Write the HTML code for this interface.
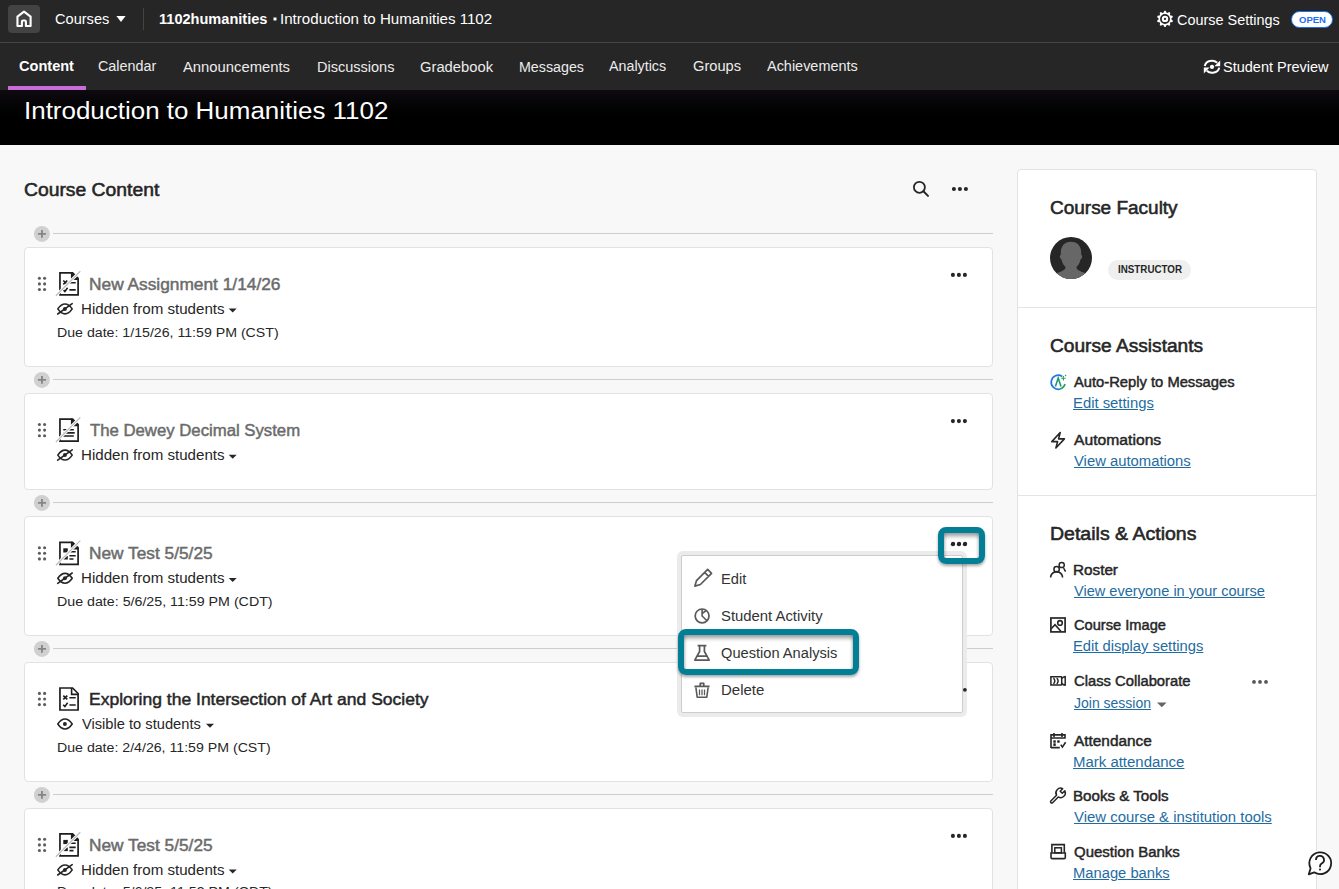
<!DOCTYPE html>
<html><head><meta charset="utf-8"><style>
html,body{margin:0;padding:0;}
body{width:1339px;height:889px;overflow:hidden;position:relative;background:#f8f8f8;font-family:"Liberation Sans",sans-serif;}
.t{position:absolute;line-height:1;white-space:nowrap;}
.r{position:absolute;}
.ov{position:absolute;left:0;top:0;}
</style></head><body>
<div class="r" style="left:0px;top:0px;width:1339px;height:90px;background:#262626;"></div>
<div class="r" style="left:0px;top:42px;width:1339px;height:1px;background:#454545;"></div>
<div class="r" style="left:8px;top:5px;width:32px;height:28px;background:#434343;border-radius:4px;"></div>
<div class="t" style="left:54.96px;top:12.34px;font-size:14px;color:#fff;transform:scaleX(1.0412);transform-origin:0 0;">Courses</div>
<div class="r" style="left:143px;top:8px;width:1px;height:22px;background:#444;"></div>
<div class="t" style="left:159.46px;top:12.34px;font-size:14px;color:#fff;font-weight:700;transform:scaleX(1.0398);transform-origin:0 0;">1102humanities</div>
<div class="t" style="left:280.42px;top:12.34px;font-size:14px;color:#fff;transform:scaleX(1.0790);transform-origin:0 0;">Introduction to Humanities 1102</div>
<div class="t" style="left:1176.77px;top:13.44px;font-size:14px;color:#fff;transform:scaleX(1.0306);transform-origin:0 0;">Course Settings</div>
<div class="r" style="left:1291px;top:11px;width:41.5px;height:16.5px;background:#fff;border:1px solid #1a6ff2;border-radius:9px;box-sizing:border-box;"></div>
<div class="t" style="left:1298.80px;top:14.80px;font-size:9.8px;color:#1a6ff2;font-weight:700;transform:scaleX(0.9704);transform-origin:0 0;">OPEN</div>
<div class="t" style="left:18.96px;top:59.24px;font-size:14px;color:#fff;font-weight:700;transform:scaleX(1.0394);transform-origin:0 0;">Content</div>
<div class="t" style="left:97.88px;top:59.24px;font-size:14px;color:#ececec;transform:scaleX(1.0250);transform-origin:0 0;">Calendar</div>
<div class="t" style="left:183.30px;top:60.04px;font-size:14px;color:#ececec;transform:scaleX(1.0574);transform-origin:0 0;">Announcements</div>
<div class="t" style="left:317.36px;top:60.04px;font-size:14px;color:#ececec;transform:scaleX(1.0370);transform-origin:0 0;">Discussions</div>
<div class="t" style="left:420.05px;top:60.04px;font-size:14px;color:#ececec;transform:scaleX(1.0544);transform-origin:0 0;">Gradebook</div>
<div class="t" style="left:518.88px;top:60.04px;font-size:14px;color:#ececec;transform:scaleX(1.0177);transform-origin:0 0;">Messages</div>
<div class="t" style="left:609.10px;top:59.24px;font-size:14px;color:#ececec;transform:scaleX(1.0196);transform-origin:0 0;">Analytics</div>
<div class="t" style="left:692.85px;top:59.24px;font-size:14px;color:#ececec;transform:scaleX(1.0467);transform-origin:0 0;">Groups</div>
<div class="t" style="left:766.60px;top:59.24px;font-size:14px;color:#ececec;transform:scaleX(1.0318);transform-origin:0 0;">Achievements</div>
<div class="r" style="left:8px;top:86px;width:78px;height:4px;background:#c86dd7;"></div>
<div class="t" style="left:1222.96px;top:60.34px;font-size:14px;color:#fff;transform:scaleX(1.0356);transform-origin:0 0;">Student Preview</div>
<div class="r" style="left:0px;top:90px;width:1339px;height:55px;background:linear-gradient(#0d0b0f 0px,#050406 14px,#000 27px);"></div>
<div class="t" style="left:24.07px;top:100.36px;font-size:23.3px;color:#fff;transform:scaleX(1.1136);transform-origin:0 0;">Introduction to Humanities 1102</div>
<div class="t" style="left:23.83px;top:180.95px;font-size:18px;color:#262626;transform:scaleX(1.0728);transform-origin:0 0;-webkit-text-stroke:0.55px #262626;">Course Content</div>
<div class="r" style="left:53px;top:233px;width:940px;height:1px;background:#cdcdcd;"></div>
<div class="r" style="left:53px;top:379px;width:940px;height:1px;background:#cdcdcd;"></div>
<div class="r" style="left:53px;top:502px;width:940px;height:1px;background:#cdcdcd;"></div>
<div class="r" style="left:53px;top:648px;width:940px;height:1px;background:#cdcdcd;"></div>
<div class="r" style="left:53px;top:794px;width:940px;height:1px;background:#cdcdcd;"></div>
<div class="r" style="left:24px;top:247px;width:969px;height:120px;background:#fff;border:1px solid #e2e2e2;border-radius:4px;box-sizing:border-box;"></div>
<div class="t" style="left:88.52px;top:276.65px;font-size:16px;color:#6b6b6b;transform:scaleX(1.0818);transform-origin:0 0;-webkit-text-stroke:0.45px #6b6b6b;">New Assignment 1/14/26</div>
<div class="t" style="left:80.52px;top:301.54px;font-size:14px;color:#262626;transform:scaleX(1.0788);transform-origin:0 0;">Hidden from students</div>
<div class="t" style="left:56.67px;top:325.50px;font-size:13.7px;color:#262626;transform:scaleX(1.0343);transform-origin:0 0;">Due date: 1/15/26, 11:59 PM (CST)</div>
<div class="r" style="left:24px;top:393px;width:969px;height:97px;background:#fff;border:1px solid #e2e2e2;border-radius:4px;box-sizing:border-box;"></div>
<div class="t" style="left:89.60px;top:422.85px;font-size:16px;color:#6b6b6b;transform:scaleX(1.0455);transform-origin:0 0;-webkit-text-stroke:0.45px #6b6b6b;">The Dewey Decimal System</div>
<div class="t" style="left:80.52px;top:447.74px;font-size:14px;color:#262626;transform:scaleX(1.0788);transform-origin:0 0;">Hidden from students</div>
<div class="r" style="left:24px;top:516px;width:969px;height:120px;background:#fff;border:1px solid #e2e2e2;border-radius:4px;box-sizing:border-box;"></div>
<div class="t" style="left:88.52px;top:546.05px;font-size:16px;color:#6b6b6b;transform:scaleX(1.0805);transform-origin:0 0;-webkit-text-stroke:0.45px #6b6b6b;">New Test 5/5/25</div>
<div class="t" style="left:80.52px;top:570.94px;font-size:14px;color:#262626;transform:scaleX(1.0788);transform-origin:0 0;">Hidden from students</div>
<div class="t" style="left:56.66px;top:594.90px;font-size:13.7px;color:#262626;transform:scaleX(1.0393);transform-origin:0 0;">Due date: 5/6/25, 11:59 PM (CDT)</div>
<div class="r" style="left:24px;top:662px;width:969px;height:120px;background:#fff;border:1px solid #e2e2e2;border-radius:4px;box-sizing:border-box;"></div>
<div class="t" style="left:88.51px;top:691.75px;font-size:16px;color:#262626;transform:scaleX(1.0939);transform-origin:0 0;-webkit-text-stroke:0.45px #262626;">Exploring the Intersection of Art and Society</div>
<div class="t" style="left:81.60px;top:716.64px;font-size:14px;color:#262626;transform:scaleX(1.0478);transform-origin:0 0;">Visible to students</div>
<div class="t" style="left:56.67px;top:740.60px;font-size:13.7px;color:#262626;transform:scaleX(1.0337);transform-origin:0 0;">Due date: 2/4/26, 11:59 PM (CST)</div>
<div class="r" style="left:24px;top:808px;width:969px;height:120px;background:#fff;border:1px solid #e2e2e2;border-radius:4px;box-sizing:border-box;"></div>
<div class="t" style="left:88.52px;top:837.65px;font-size:16px;color:#6b6b6b;transform:scaleX(1.0805);transform-origin:0 0;-webkit-text-stroke:0.45px #6b6b6b;">New Test 5/5/25</div>
<div class="t" style="left:80.52px;top:862.54px;font-size:14px;color:#262626;transform:scaleX(1.0788);transform-origin:0 0;">Hidden from students</div>
<div class="t" style="left:56.66px;top:885.30px;font-size:13.7px;color:#262626;transform:scaleX(1.0393);transform-origin:0 0;">Due date: 5/6/25, 11:59 PM (CDT)</div>
<div class="r" style="left:1017px;top:169px;width:300px;height:760px;background:#fff;border:1px solid #e2e2e2;border-radius:4px;box-sizing:border-box;"></div>
<div class="r" style="left:1018px;top:307px;width:298px;height:1px;background:#e4e4e4;"></div>
<div class="r" style="left:1018px;top:495px;width:298px;height:1px;background:#e4e4e4;"></div>
<div class="t" style="left:1049.85px;top:199.25px;font-size:18px;color:#262626;transform:scaleX(1.0542);transform-origin:0 0;-webkit-text-stroke:0.55px #262626;">Course Faculty</div>
<div class="r" style="left:1108px;top:260px;width:83px;height:20px;background:#efefef;border-radius:10px;"></div>
<div class="t" style="left:1117.54px;top:265.26px;font-size:10.2px;color:#262626;font-weight:700;transform:scaleX(0.9615);transform-origin:0 0;">INSTRUCTOR</div>
<div class="t" style="left:1049.84px;top:336.85px;font-size:18px;color:#262626;transform:scaleX(1.0629);transform-origin:0 0;-webkit-text-stroke:0.55px #262626;">Course Assistants</div>
<div class="t" style="left:1074.00px;top:375.04px;font-size:14px;color:#262626;transform:scaleX(1.0526);transform-origin:0 0;-webkit-text-stroke:0.45px #262626;">Auto-Reply to Messages</div>
<div class="t" style="left:1072.94px;top:395.94px;font-size:14px;color:#1e6ca1;transform:scaleX(1.0600);transform-origin:0 0;text-decoration:underline;">Edit settings</div>
<div class="t" style="left:1074.00px;top:433.14px;font-size:14px;color:#262626;transform:scaleX(1.1205);transform-origin:0 0;-webkit-text-stroke:0.45px #262626;">Automations</div>
<div class="t" style="left:1074.00px;top:454.14px;font-size:14px;color:#1e6ca1;transform:scaleX(1.0591);transform-origin:0 0;text-decoration:underline;">View automations</div>
<div class="t" style="left:1049.82px;top:525.25px;font-size:18px;color:#262626;transform:scaleX(1.0843);transform-origin:0 0;-webkit-text-stroke:0.55px #262626;">Details &amp; Actions</div>
<div class="t" style="left:1072.91px;top:563.14px;font-size:14px;color:#262626;transform:scaleX(1.0900);transform-origin:0 0;-webkit-text-stroke:0.45px #262626;">Roster</div>
<div class="t" style="left:1074.00px;top:583.94px;font-size:14px;color:#1e6ca1;transform:scaleX(1.0410);transform-origin:0 0;text-decoration:underline;">View everyone in your course</div>
<div class="t" style="left:1074.00px;top:617.84px;font-size:14px;color:#262626;transform:scaleX(1.0455);transform-origin:0 0;-webkit-text-stroke:0.45px #262626;">Course Image</div>
<div class="t" style="left:1072.95px;top:638.84px;font-size:14px;color:#1e6ca1;transform:scaleX(1.0533);transform-origin:0 0;text-decoration:underline;">Edit display settings</div>
<div class="t" style="left:1074.00px;top:674.04px;font-size:14px;color:#262626;transform:scaleX(1.0545);transform-origin:0 0;-webkit-text-stroke:0.45px #262626;">Class Collaborate</div>
<div class="t" style="left:1074.00px;top:696.04px;font-size:14px;color:#1e6ca1;transform:scaleX(1.0000);transform-origin:0 0;text-decoration:underline;">Join session</div>
<div class="t" style="left:1074.00px;top:733.74px;font-size:14px;color:#262626;transform:scaleX(1.0986);transform-origin:0 0;-webkit-text-stroke:0.45px #262626;">Attendance</div>
<div class="t" style="left:1072.93px;top:755.14px;font-size:14px;color:#1e6ca1;transform:scaleX(1.0680);transform-origin:0 0;text-decoration:underline;">Mark attendance</div>
<div class="t" style="left:1072.92px;top:789.14px;font-size:14px;color:#262626;transform:scaleX(1.0805);transform-origin:0 0;-webkit-text-stroke:0.45px #262626;">Books &amp; Tools</div>
<div class="t" style="left:1074.00px;top:810.44px;font-size:14px;color:#1e6ca1;transform:scaleX(1.0649);transform-origin:0 0;text-decoration:underline;">View course &amp; institution tools</div>
<div class="t" style="left:1074.00px;top:845.44px;font-size:14px;color:#262626;transform:scaleX(1.0707);transform-origin:0 0;-webkit-text-stroke:0.45px #262626;">Question Banks</div>
<div class="t" style="left:1072.95px;top:865.74px;font-size:14px;color:#1e6ca1;transform:scaleX(1.0533);transform-origin:0 0;text-decoration:underline;">Manage banks</div>
<svg class="ov" width="1339" height="889"><path d="M17.45 26.05 V16.6 L24 11.7 L30.6 16.6 V26.05 H25.9 V21.7 Q25.9 20.55 24.75 20.55 H23.05 Q21.9 20.55 21.9 21.7 V26.05 Z" fill="none" stroke="#fff" stroke-width="2.1" stroke-linejoin="round"/><path d="M116.4 15.9 H125.6 L121 21.9 Z" fill="#fff"/><rect x="273.5" y="17.5" width="3" height="3" fill="#fff"/><path d="M1165.00 10.80 L1165.25 10.80 L1165.51 10.82 L1165.74 11.07 L1165.95 11.38 L1166.13 11.74 L1166.30 12.10 L1166.45 12.43 L1166.59 12.70 L1166.79 12.75 L1166.98 12.81 L1167.17 12.88 L1167.36 12.95 L1167.63 12.81 L1167.95 12.63 L1168.29 12.44 L1168.65 12.26 L1169.01 12.13 L1169.34 12.06 L1169.55 12.20 L1169.76 12.35 L1169.96 12.50 L1170.16 12.66 L1170.20 13.00 L1170.19 13.38 L1170.13 13.77 L1170.05 14.16 L1169.97 14.52 L1169.93 14.82 L1170.06 14.98 L1170.18 15.14 L1170.29 15.30 L1170.40 15.47 L1170.71 15.52 L1171.07 15.56 L1171.46 15.61 L1171.85 15.67 L1172.22 15.77 L1172.53 15.92 L1172.62 16.16 L1172.70 16.40 L1172.78 16.64 L1172.85 16.89 L1172.68 17.18 L1172.44 17.48 L1172.16 17.77 L1171.87 18.03 L1171.60 18.28 L1171.39 18.50 L1171.40 18.70 L1171.40 18.90 L1171.40 19.10 L1171.39 19.30 L1171.60 19.52 L1171.87 19.77 L1172.16 20.03 L1172.44 20.32 L1172.68 20.62 L1172.85 20.91 L1172.78 21.16 L1172.70 21.40 L1172.62 21.64 L1172.53 21.88 L1172.22 22.03 L1171.85 22.13 L1171.46 22.19 L1171.07 22.24 L1170.71 22.28 L1170.40 22.33 L1170.29 22.50 L1170.18 22.66 L1170.06 22.82 L1169.93 22.98 L1169.97 23.28 L1170.05 23.64 L1170.13 24.03 L1170.19 24.42 L1170.20 24.80 L1170.16 25.14 L1169.96 25.30 L1169.76 25.45 L1169.55 25.60 L1169.34 25.74 L1169.01 25.67 L1168.65 25.54 L1168.29 25.36 L1167.95 25.17 L1167.63 24.99 L1167.36 24.85 L1167.17 24.92 L1166.98 24.99 L1166.79 25.05 L1166.59 25.10 L1166.45 25.37 L1166.30 25.70 L1166.13 26.06 L1165.95 26.42 L1165.74 26.73 L1165.51 26.98 L1165.25 27.00 L1165.00 27.00 L1164.75 27.00 L1164.49 26.98 L1164.26 26.73 L1164.05 26.42 L1163.87 26.06 L1163.70 25.70 L1163.55 25.37 L1163.41 25.10 L1163.21 25.05 L1163.02 24.99 L1162.83 24.92 L1162.64 24.85 L1162.37 24.99 L1162.05 25.17 L1161.71 25.36 L1161.35 25.54 L1160.99 25.67 L1160.66 25.74 L1160.45 25.60 L1160.24 25.45 L1160.04 25.30 L1159.84 25.14 L1159.80 24.80 L1159.81 24.42 L1159.87 24.03 L1159.95 23.64 L1160.03 23.28 L1160.07 22.98 L1159.94 22.82 L1159.82 22.66 L1159.71 22.50 L1159.60 22.33 L1159.29 22.28 L1158.93 22.24 L1158.54 22.19 L1158.15 22.13 L1157.78 22.03 L1157.47 21.88 L1157.38 21.64 L1157.30 21.40 L1157.22 21.16 L1157.15 20.91 L1157.32 20.62 L1157.56 20.32 L1157.84 20.03 L1158.13 19.77 L1158.40 19.52 L1158.61 19.30 L1158.60 19.10 L1158.60 18.90 L1158.60 18.70 L1158.61 18.50 L1158.40 18.28 L1158.13 18.03 L1157.84 17.77 L1157.56 17.48 L1157.32 17.18 L1157.15 16.89 L1157.22 16.64 L1157.30 16.40 L1157.38 16.16 L1157.47 15.92 L1157.78 15.77 L1158.15 15.67 L1158.54 15.61 L1158.93 15.56 L1159.29 15.52 L1159.60 15.47 L1159.71 15.30 L1159.82 15.14 L1159.94 14.98 L1160.07 14.82 L1160.03 14.52 L1159.95 14.16 L1159.87 13.77 L1159.81 13.38 L1159.80 13.00 L1159.84 12.66 L1160.04 12.50 L1160.24 12.35 L1160.45 12.20 L1160.66 12.06 L1160.99 12.13 L1161.35 12.26 L1161.71 12.44 L1162.05 12.63 L1162.37 12.81 L1162.64 12.95 L1162.83 12.88 L1163.02 12.81 L1163.21 12.75 L1163.41 12.70 L1163.55 12.43 L1163.70 12.10 L1163.87 11.74 L1164.05 11.38 L1164.26 11.07 L1164.49 10.82 L1164.75 10.80 Z M1169.95 18.9 A4.95 4.95 0 1 0 1160.05 18.9 A4.95 4.95 0 1 0 1169.95 18.9 Z" fill="#fff" fill-rule="evenodd"/><circle cx="1165" cy="18.9" r="2.15" fill="none" stroke="#fff" stroke-width="2.1"/><path d="M1204.8 66 A7.2 6.2 0 0 1 1217.2 62.8" fill="none" stroke="#fff" stroke-width="2"/><path d="M1220.2 60.4 V66.2 H1214.4 Z" fill="#fff"/><path d="M1219.2 67.6 A7.2 6.2 0 0 1 1206.8 70.8" fill="none" stroke="#fff" stroke-width="2"/><path d="M1203.8 73.4 V67.6 H1209.6 Z" fill="#fff"/><circle cx="1212" cy="66.9" r="2.1" fill="#fff"/><circle cx="919.4" cy="187.3" r="5.5" fill="none" stroke="#262626" stroke-width="1.8"/><path d="M923.4 191.3 L928 195.9" stroke="#262626" stroke-width="2" stroke-linecap="round"/><circle cx="953.9" cy="189" r="2.05" fill="#262626"/><circle cx="959.9" cy="189" r="2.05" fill="#262626"/><circle cx="965.9" cy="189" r="2.05" fill="#262626"/><circle cx="41.9" cy="233.9" r="8" fill="#d0d0d0"/><path d="M41.95 229.95000000000002V237.85M37.95 233.9H45.95" stroke="#858585" stroke-width="1.8"/><circle cx="41.9" cy="379.9" r="8" fill="#d0d0d0"/><path d="M41.95 375.95V383.84999999999997M37.95 379.9H45.95" stroke="#858585" stroke-width="1.8"/><circle cx="41.9" cy="502.9" r="8" fill="#d0d0d0"/><path d="M41.95 498.95V506.84999999999997M37.95 502.9H45.95" stroke="#858585" stroke-width="1.8"/><circle cx="41.9" cy="648.9" r="8" fill="#d0d0d0"/><path d="M41.95 644.9499999999999V652.85M37.95 648.9H45.95" stroke="#858585" stroke-width="1.8"/><circle cx="41.9" cy="794.9" r="8" fill="#d0d0d0"/><path d="M41.95 790.9499999999999V798.85M37.95 794.9H45.95" stroke="#858585" stroke-width="1.8"/><circle cx="39.4" cy="278.30" r="1.55" fill="#5c5c5c"/><circle cx="44.6" cy="278.30" r="1.55" fill="#5c5c5c"/><circle cx="39.4" cy="283.90" r="1.55" fill="#5c5c5c"/><circle cx="44.6" cy="283.90" r="1.55" fill="#5c5c5c"/><circle cx="39.4" cy="289.50" r="1.55" fill="#5c5c5c"/><circle cx="44.6" cy="289.50" r="1.55" fill="#5c5c5c"/><g transform="translate(56,269.30)"><path d="M3.95 3.6 H16.6 L22.1 9.1 V25.6 H3.95 Z" fill="none" stroke="#1e1e1e" stroke-width="1.7" stroke-linejoin="miter"/><path d="M15.6 3.6 V10 H22.1 Z" fill="#1e1e1e" stroke="#1e1e1e" stroke-width="1.4" stroke-linejoin="round"/><path d="M7.3 11.2 L11.3 15 M11.3 11.2 L7.3 15" stroke="#1e1e1e" stroke-width="1.6"/><path d="M7.2 20.3 L8.9 22.1 L11.6 18.4" fill="none" stroke="#1e1e1e" stroke-width="1.6"/><path d="M13.4 13.4 H19.7 M13.4 20.6 H19.7" stroke="#1e1e1e" stroke-width="1.6"/><path d="M-0.1 26.5 L24.3 1.9" stroke="#fff" stroke-width="3"/><path d="M-0.1 26.5 L24.3 1.9" stroke="#bdbdbd" stroke-width="1.3"/></g><g transform="translate(56,301.80)"><path d="M1.8 7.1 C6.3 0.5 11.7 0.5 16.2 7.1 C11.7 13.7 6.3 13.7 1.8 7.1 Z" fill="none" stroke="#262626" stroke-width="1.6" stroke-linejoin="round"/><circle cx="8.9" cy="7.1" r="2" fill="#262626"/><path d="M1.7 12.2 L16.2 1.8" stroke="#262626" stroke-width="1.6" stroke-linecap="round"/></g><path d="M228.7 308.60 H236.7 L232.7 312.60 Z" fill="#262626"/><circle cx="952.9" cy="274.90000000000003" r="2.05" fill="#262626"/><circle cx="958.9" cy="274.90000000000003" r="2.05" fill="#262626"/><circle cx="964.9" cy="274.90000000000003" r="2.05" fill="#262626"/><circle cx="39.4" cy="424.50" r="1.55" fill="#5c5c5c"/><circle cx="44.6" cy="424.50" r="1.55" fill="#5c5c5c"/><circle cx="39.4" cy="430.10" r="1.55" fill="#5c5c5c"/><circle cx="44.6" cy="430.10" r="1.55" fill="#5c5c5c"/><circle cx="39.4" cy="435.70" r="1.55" fill="#5c5c5c"/><circle cx="44.6" cy="435.70" r="1.55" fill="#5c5c5c"/><g transform="translate(56,415.50)"><path d="M3.95 3.6 H16.6 L22.1 9.1 V25.6 H3.95 Z" fill="none" stroke="#1e1e1e" stroke-width="1.7" stroke-linejoin="miter"/><path d="M15.6 3.6 V10 H22.1 Z" fill="#1e1e1e" stroke="#1e1e1e" stroke-width="1.4" stroke-linejoin="round"/><path d="M7.3 14.3 H17.8 M7.3 17.4 H18.7 M7.3 20.5 H17.8" stroke="#1e1e1e" stroke-width="1.6"/><path d="M-0.1 26.5 L24.3 1.9" stroke="#fff" stroke-width="3"/><path d="M-0.1 26.5 L24.3 1.9" stroke="#bdbdbd" stroke-width="1.3"/></g><g transform="translate(56,448.00)"><path d="M1.8 7.1 C6.3 0.5 11.7 0.5 16.2 7.1 C11.7 13.7 6.3 13.7 1.8 7.1 Z" fill="none" stroke="#262626" stroke-width="1.6" stroke-linejoin="round"/><circle cx="8.9" cy="7.1" r="2" fill="#262626"/><path d="M1.7 12.2 L16.2 1.8" stroke="#262626" stroke-width="1.6" stroke-linecap="round"/></g><path d="M228.7 454.80 H236.7 L232.7 458.80 Z" fill="#262626"/><circle cx="952.9" cy="421.1" r="2.05" fill="#262626"/><circle cx="958.9" cy="421.1" r="2.05" fill="#262626"/><circle cx="964.9" cy="421.1" r="2.05" fill="#262626"/><circle cx="39.4" cy="547.70" r="1.55" fill="#5c5c5c"/><circle cx="44.6" cy="547.70" r="1.55" fill="#5c5c5c"/><circle cx="39.4" cy="553.30" r="1.55" fill="#5c5c5c"/><circle cx="44.6" cy="553.30" r="1.55" fill="#5c5c5c"/><circle cx="39.4" cy="558.90" r="1.55" fill="#5c5c5c"/><circle cx="44.6" cy="558.90" r="1.55" fill="#5c5c5c"/><g transform="translate(56,538.70)"><path d="M3.95 3.6 H16.6 L22.1 9.1 V25.6 H3.95 Z" fill="none" stroke="#1e1e1e" stroke-width="1.7" stroke-linejoin="miter"/><path d="M15.6 3.6 V10 H22.1 Z" fill="#1e1e1e" stroke="#1e1e1e" stroke-width="1.4" stroke-linejoin="round"/><rect x="7.3" y="9.6" width="4.5" height="4.2" fill="#1e1e1e"/><rect x="7.3" y="17.2" width="4.5" height="3.6" fill="#1e1e1e"/><path d="M13.4 13 H19.7 M13.4 17.1 H19.7 M13.4 20.3 H17.5" stroke="#1e1e1e" stroke-width="1.6"/><path d="M-0.1 26.5 L24.3 1.9" stroke="#fff" stroke-width="3"/><path d="M-0.1 26.5 L24.3 1.9" stroke="#bdbdbd" stroke-width="1.3"/></g><g transform="translate(56,571.20)"><path d="M1.8 7.1 C6.3 0.5 11.7 0.5 16.2 7.1 C11.7 13.7 6.3 13.7 1.8 7.1 Z" fill="none" stroke="#262626" stroke-width="1.6" stroke-linejoin="round"/><circle cx="8.9" cy="7.1" r="2" fill="#262626"/><path d="M1.7 12.2 L16.2 1.8" stroke="#262626" stroke-width="1.6" stroke-linecap="round"/></g><path d="M228.7 578.00 H236.7 L232.7 582.00 Z" fill="#262626"/><circle cx="952.9" cy="544.3000000000001" r="2.05" fill="#262626"/><circle cx="958.9" cy="544.3000000000001" r="2.05" fill="#262626"/><circle cx="964.9" cy="544.3000000000001" r="2.05" fill="#262626"/><circle cx="39.4" cy="693.40" r="1.55" fill="#5c5c5c"/><circle cx="44.6" cy="693.40" r="1.55" fill="#5c5c5c"/><circle cx="39.4" cy="699.00" r="1.55" fill="#5c5c5c"/><circle cx="44.6" cy="699.00" r="1.55" fill="#5c5c5c"/><circle cx="39.4" cy="704.60" r="1.55" fill="#5c5c5c"/><circle cx="44.6" cy="704.60" r="1.55" fill="#5c5c5c"/><g transform="translate(56,684.40)"><path d="M3.95 3.6 H16.6 L22.1 9.1 V25.6 H3.95 Z" fill="none" stroke="#1e1e1e" stroke-width="1.7" stroke-linejoin="miter"/><path d="M15.6 3.6 V10 H22.1" fill="none" stroke="#1e1e1e" stroke-width="1.6"/><path d="M7.3 11.2 L11.3 15 M11.3 11.2 L7.3 15" stroke="#1e1e1e" stroke-width="1.6"/><path d="M7.2 20.3 L8.9 22.1 L11.6 18.4" fill="none" stroke="#1e1e1e" stroke-width="1.6"/><path d="M13.4 13.4 H19.7 M13.4 20.6 H19.7" stroke="#1e1e1e" stroke-width="1.6"/></g><g transform="translate(56,716.90)"><path d="M1.8 7.1 C6.3 0.5 11.7 0.5 16.2 7.1 C11.7 13.7 6.3 13.7 1.8 7.1 Z" fill="none" stroke="#262626" stroke-width="1.6" stroke-linejoin="round"/><circle cx="8.9" cy="7.1" r="2" fill="#262626"/></g><path d="M206 723.70 H214 L210 727.70 Z" fill="#262626"/><circle cx="952.9" cy="690.0" r="2.05" fill="#262626"/><circle cx="958.9" cy="690.0" r="2.05" fill="#262626"/><circle cx="964.9" cy="690.0" r="2.05" fill="#262626"/><circle cx="39.4" cy="839.30" r="1.55" fill="#5c5c5c"/><circle cx="44.6" cy="839.30" r="1.55" fill="#5c5c5c"/><circle cx="39.4" cy="844.90" r="1.55" fill="#5c5c5c"/><circle cx="44.6" cy="844.90" r="1.55" fill="#5c5c5c"/><circle cx="39.4" cy="850.50" r="1.55" fill="#5c5c5c"/><circle cx="44.6" cy="850.50" r="1.55" fill="#5c5c5c"/><g transform="translate(56,830.30)"><path d="M3.95 3.6 H16.6 L22.1 9.1 V25.6 H3.95 Z" fill="none" stroke="#1e1e1e" stroke-width="1.7" stroke-linejoin="miter"/><path d="M15.6 3.6 V10 H22.1 Z" fill="#1e1e1e" stroke="#1e1e1e" stroke-width="1.4" stroke-linejoin="round"/><rect x="7.3" y="9.6" width="4.5" height="4.2" fill="#1e1e1e"/><rect x="7.3" y="17.2" width="4.5" height="3.6" fill="#1e1e1e"/><path d="M13.4 13 H19.7 M13.4 17.1 H19.7 M13.4 20.3 H17.5" stroke="#1e1e1e" stroke-width="1.6"/><path d="M-0.1 26.5 L24.3 1.9" stroke="#fff" stroke-width="3"/><path d="M-0.1 26.5 L24.3 1.9" stroke="#bdbdbd" stroke-width="1.3"/></g><g transform="translate(56,862.80)"><path d="M1.8 7.1 C6.3 0.5 11.7 0.5 16.2 7.1 C11.7 13.7 6.3 13.7 1.8 7.1 Z" fill="none" stroke="#262626" stroke-width="1.6" stroke-linejoin="round"/><circle cx="8.9" cy="7.1" r="2" fill="#262626"/><path d="M1.7 12.2 L16.2 1.8" stroke="#262626" stroke-width="1.6" stroke-linecap="round"/></g><path d="M228.7 869.60 H236.7 L232.7 873.60 Z" fill="#262626"/><circle cx="952.9" cy="835.9" r="2.05" fill="#262626"/><circle cx="958.9" cy="835.9" r="2.05" fill="#262626"/><circle cx="964.9" cy="835.9" r="2.05" fill="#262626"/><defs><clipPath id="cc"><circle cx="1071" cy="258" r="21"/></clipPath></defs><circle cx="1071" cy="258" r="21" fill="#262626"/><g clip-path="url(#cc)" fill="#676767"><path d="M1071 241.8 C1077.5 241.8 1081.2 246.5 1081.2 252.5 L1081.2 255 C1082.6 255.2 1082.6 258.6 1080.6 259.2 C1079.8 263.5 1077.5 266.2 1076.4 267 C1076.6 269 1078 270.5 1082 272 L1094 276 V284 H1048 V276 L1060 272 C1064 270.5 1065.4 269 1065.6 267 C1064.5 266.2 1062.2 263.5 1061.4 259.2 C1059.4 258.6 1059.4 255.2 1060.8 255 L1060.8 252.5 C1060.8 246.5 1064.5 241.8 1071 241.8 Z"/></g><path d="M1062.2 376.5 A7 7 0 1 0 1060 389" fill="none" stroke="#2176ea" stroke-width="1.7"/><path d="M1060 389 A7 7 0 0 0 1065 384" fill="none" stroke="#27a05c" stroke-width="1.7"/><path d="M1055.4 386.4 L1058.2 378 L1061 386.4" fill="none" stroke="#1f9a6a" stroke-width="1.6"/><path d="M1063.4 376 V380.4 M1061.2 378.2 H1065.6" stroke="#27a05c" stroke-width="1.1"/><circle cx="1065.6" cy="375.6" r="0.8" fill="#27a05c"/><path d="M1060.2 432.5 L1051.8 441.6 H1057.6 L1055.9 448 L1064.4 438.9 H1058.6 Z" fill="none" stroke="#262626" stroke-width="1.6" stroke-linejoin="round"/><circle cx="1056.6" cy="569.2" r="2.7" fill="none" stroke="#262626" stroke-width="1.5"/><path d="M1050.6 577.6 A6 6 0 0 1 1062.6 577.6" fill="none" stroke="#262626" stroke-width="1.6"/><circle cx="1061.7" cy="565" r="2.6" fill="none" stroke="#262626" stroke-width="1.5"/><path d="M1063.6 568.2 L1065.6 571.6" stroke="#262626" stroke-width="1.5"/><rect x="1050.9" y="618" width="14.2" height="13.9" fill="none" stroke="#262626" stroke-width="1.7"/><path d="M1051.2 628.8 L1055 624.6 L1060.9 631.3" fill="none" stroke="#262626" stroke-width="1.6"/><circle cx="1060" cy="622.9" r="2.3" fill="none" stroke="#262626" stroke-width="1.6"/><path d="M1050.9 676.7 H1061 Q1061.7 676.7 1061.7 677.4 V684.4 Q1061.7 685.1 1061 685.1 H1050.9 Z" fill="none" stroke="#262626" stroke-width="1.5"/><path d="M1061.8 678.6 C1062.8 677.2 1064 676.7 1065.2 676.6 V685.2 C1064 685.1 1062.8 684.6 1061.8 683.2" fill="none" stroke="#262626" stroke-width="1.5" stroke-linejoin="round"/><path d="M1053.8 678.4 Q1055.9 681 1053.8 683.6 M1057.1 678.4 Q1059.2 681 1057.1 683.6" fill="none" stroke="#262626" stroke-width="1.4" stroke-linecap="round"/><path d="M1051 748 V734.9 H1065 V738 H1051" fill="none" stroke="#262626" stroke-width="1.6" stroke-linejoin="miter"/><path d="M1054 733 V737 M1062 733 V737 M1050.9 747.6 H1059.8" stroke="#262626" stroke-width="1.6"/><rect x="1053.3" y="740.2" width="2.5" height="2.6" rx="0.6" fill="#262626"/><rect x="1053.3" y="743.3" width="2.5" height="2.6" rx="0.6" fill="#262626"/><rect x="1057.2" y="740.2" width="2.5" height="2.6" rx="0.6" fill="#262626"/><path d="M1060.8 744.6 L1062.4 747.1 L1065.6 742.3" fill="none" stroke="#262626" stroke-width="1.6"/><path d="M1064.81 790.81 A4.7 4.7 0 0 1 1058.28 796.99 L1052.57 802.69 A1.25 1.25 0 0 1 1050.81 800.93 L1056.51 795.22 A4.7 4.7 0 0 1 1062.69 788.69 L1060.18 791.20 L1062.30 793.32 Z" fill="none" stroke="#262626" stroke-width="1.5" stroke-linejoin="round"/><path d="M1051.9 852.8 V844.6 H1064.3 V852.8" fill="none" stroke="#262626" stroke-width="1.6"/><rect x="1054.8" y="847.8" width="6.6" height="5" fill="none" stroke="#262626" stroke-width="1.5"/><path d="M1051 853 H1065.3 V857.4 Q1065.3 858.6 1064.1 858.6 H1052.2 Q1051 858.6 1051 857.4 Z" fill="none" stroke="#262626" stroke-width="1.6"/><circle cx="1254" cy="681.9" r="1.9" fill="#555"/><circle cx="1260" cy="681.9" r="1.9" fill="#555"/><circle cx="1266" cy="681.9" r="1.9" fill="#555"/><path d="M1157 702.5 H1166.6 L1161.8 707.3 Z" fill="#666"/><circle cx="1320" cy="862.9" r="12.6" fill="#fff" opacity="0.9"/><path d="M1310.6 868.3 A10.9 10.9 0 1 1 1314.2 872.3 L1308.8 874.3 Z" fill="#fff" stroke="#1e1e1e" stroke-width="1.8" stroke-linejoin="round"/><path d="M1316 860 A4 4 0 1 1 1321.5 863.6 Q1320 864.4 1320 866.4 V867.2" fill="none" stroke="#1e1e1e" stroke-width="1.8"/><rect x="1319.1" y="868.6" width="1.8" height="1.8" fill="#1e1e1e"/></svg>
<div class="r" style="left:677px;top:550.5px;width:290px;height:166.5px;background:#ebebeb;border-radius:6px;"></div>
<div class="r" style="left:681px;top:555px;width:282px;height:158px;background:#fff;border:1px solid #cdcdcd;border-radius:2px;box-sizing:border-box;"></div>
<div class="t" style="left:721.15px;top:572.24px;font-size:14px;color:#333;transform:scaleX(1.0478);transform-origin:0 0;">Edit</div>
<div class="t" style="left:721.14px;top:609.34px;font-size:14px;color:#333;transform:scaleX(1.0611);transform-origin:0 0;">Student Activity</div>
<div class="t" style="left:721.15px;top:646.14px;font-size:14px;color:#333;transform:scaleX(1.0455);transform-origin:0 0;">Question Analysis</div>
<div class="t" style="left:721.13px;top:683.04px;font-size:14px;color:#333;transform:scaleX(1.0718);transform-origin:0 0;">Delete</div>
<div class="r" style="left:938px;top:527px;width:47px;height:37px;background:transparent;border:6px solid #027f95;border-radius:8px;box-sizing:border-box;box-shadow:0 2px 3px rgba(0,0,0,.35), inset 0 4px 4px -1px rgba(0,0,0,.4), inset 3px 0 3px -2px rgba(0,0,0,.15), inset -3px 0 3px -2px rgba(0,0,0,.15);"></div>
<div class="r" style="left:678px;top:629px;width:181px;height:46px;background:transparent;border:6.2px solid #027f95;border-radius:8px;box-sizing:border-box;box-shadow:0 2px 3px rgba(0,0,0,.35), inset 0 4px 4px -1px rgba(0,0,0,.4), inset 3px 0 3px -2px rgba(0,0,0,.15), inset -3px 0 3px -2px rgba(0,0,0,.15);"></div>
<svg class="ov" width="1339" height="889"><path d="M694.90 586.10 L700.38 584.51 L711.54 573.34 L707.66 569.46 L696.49 580.62 Z M708.57 576.31 L704.69 572.43" fill="none" stroke="#595959" stroke-width="1.7" stroke-linejoin="round"/><circle cx="702.1" cy="615.9" r="6.9" fill="none" stroke="#595959" stroke-width="1.7"/><path d="M702.1 609 V616 L707 620.8 M702.1 613.5 L706.5 610.3" fill="none" stroke="#595959" stroke-width="1.6"/><path d="M697.6 645.6 H706.4 M699.6 645.6 V651.5 L694.8 660.1 H709.2 L704.4 651.5 V645.6 M696.8 656.2 H707.2" fill="none" stroke="#595959" stroke-width="1.7" stroke-linejoin="round"/><path d="M694.4 686.4 H709.6 M700.2 686.2 V683.4 H703.8 V686.2 M695.9 687.5 L697.2 697.2 H706.8 L708.1 687.5" fill="none" stroke="#595959" stroke-width="1.6" stroke-linejoin="round"/><path d="M699.5 689.6 V695.2 M702 689.6 V695.2 M704.5 689.6 V695.2" stroke="#595959" stroke-width="1.25"/><circle cx="953.1" cy="543.8" r="2.05" fill="#262626"/><circle cx="959.1" cy="543.8" r="2.05" fill="#262626"/><circle cx="965.1" cy="543.8" r="2.05" fill="#262626"/><circle cx="964.9" cy="689.8" r="1.9" fill="#262626"/></svg>
</body></html>
